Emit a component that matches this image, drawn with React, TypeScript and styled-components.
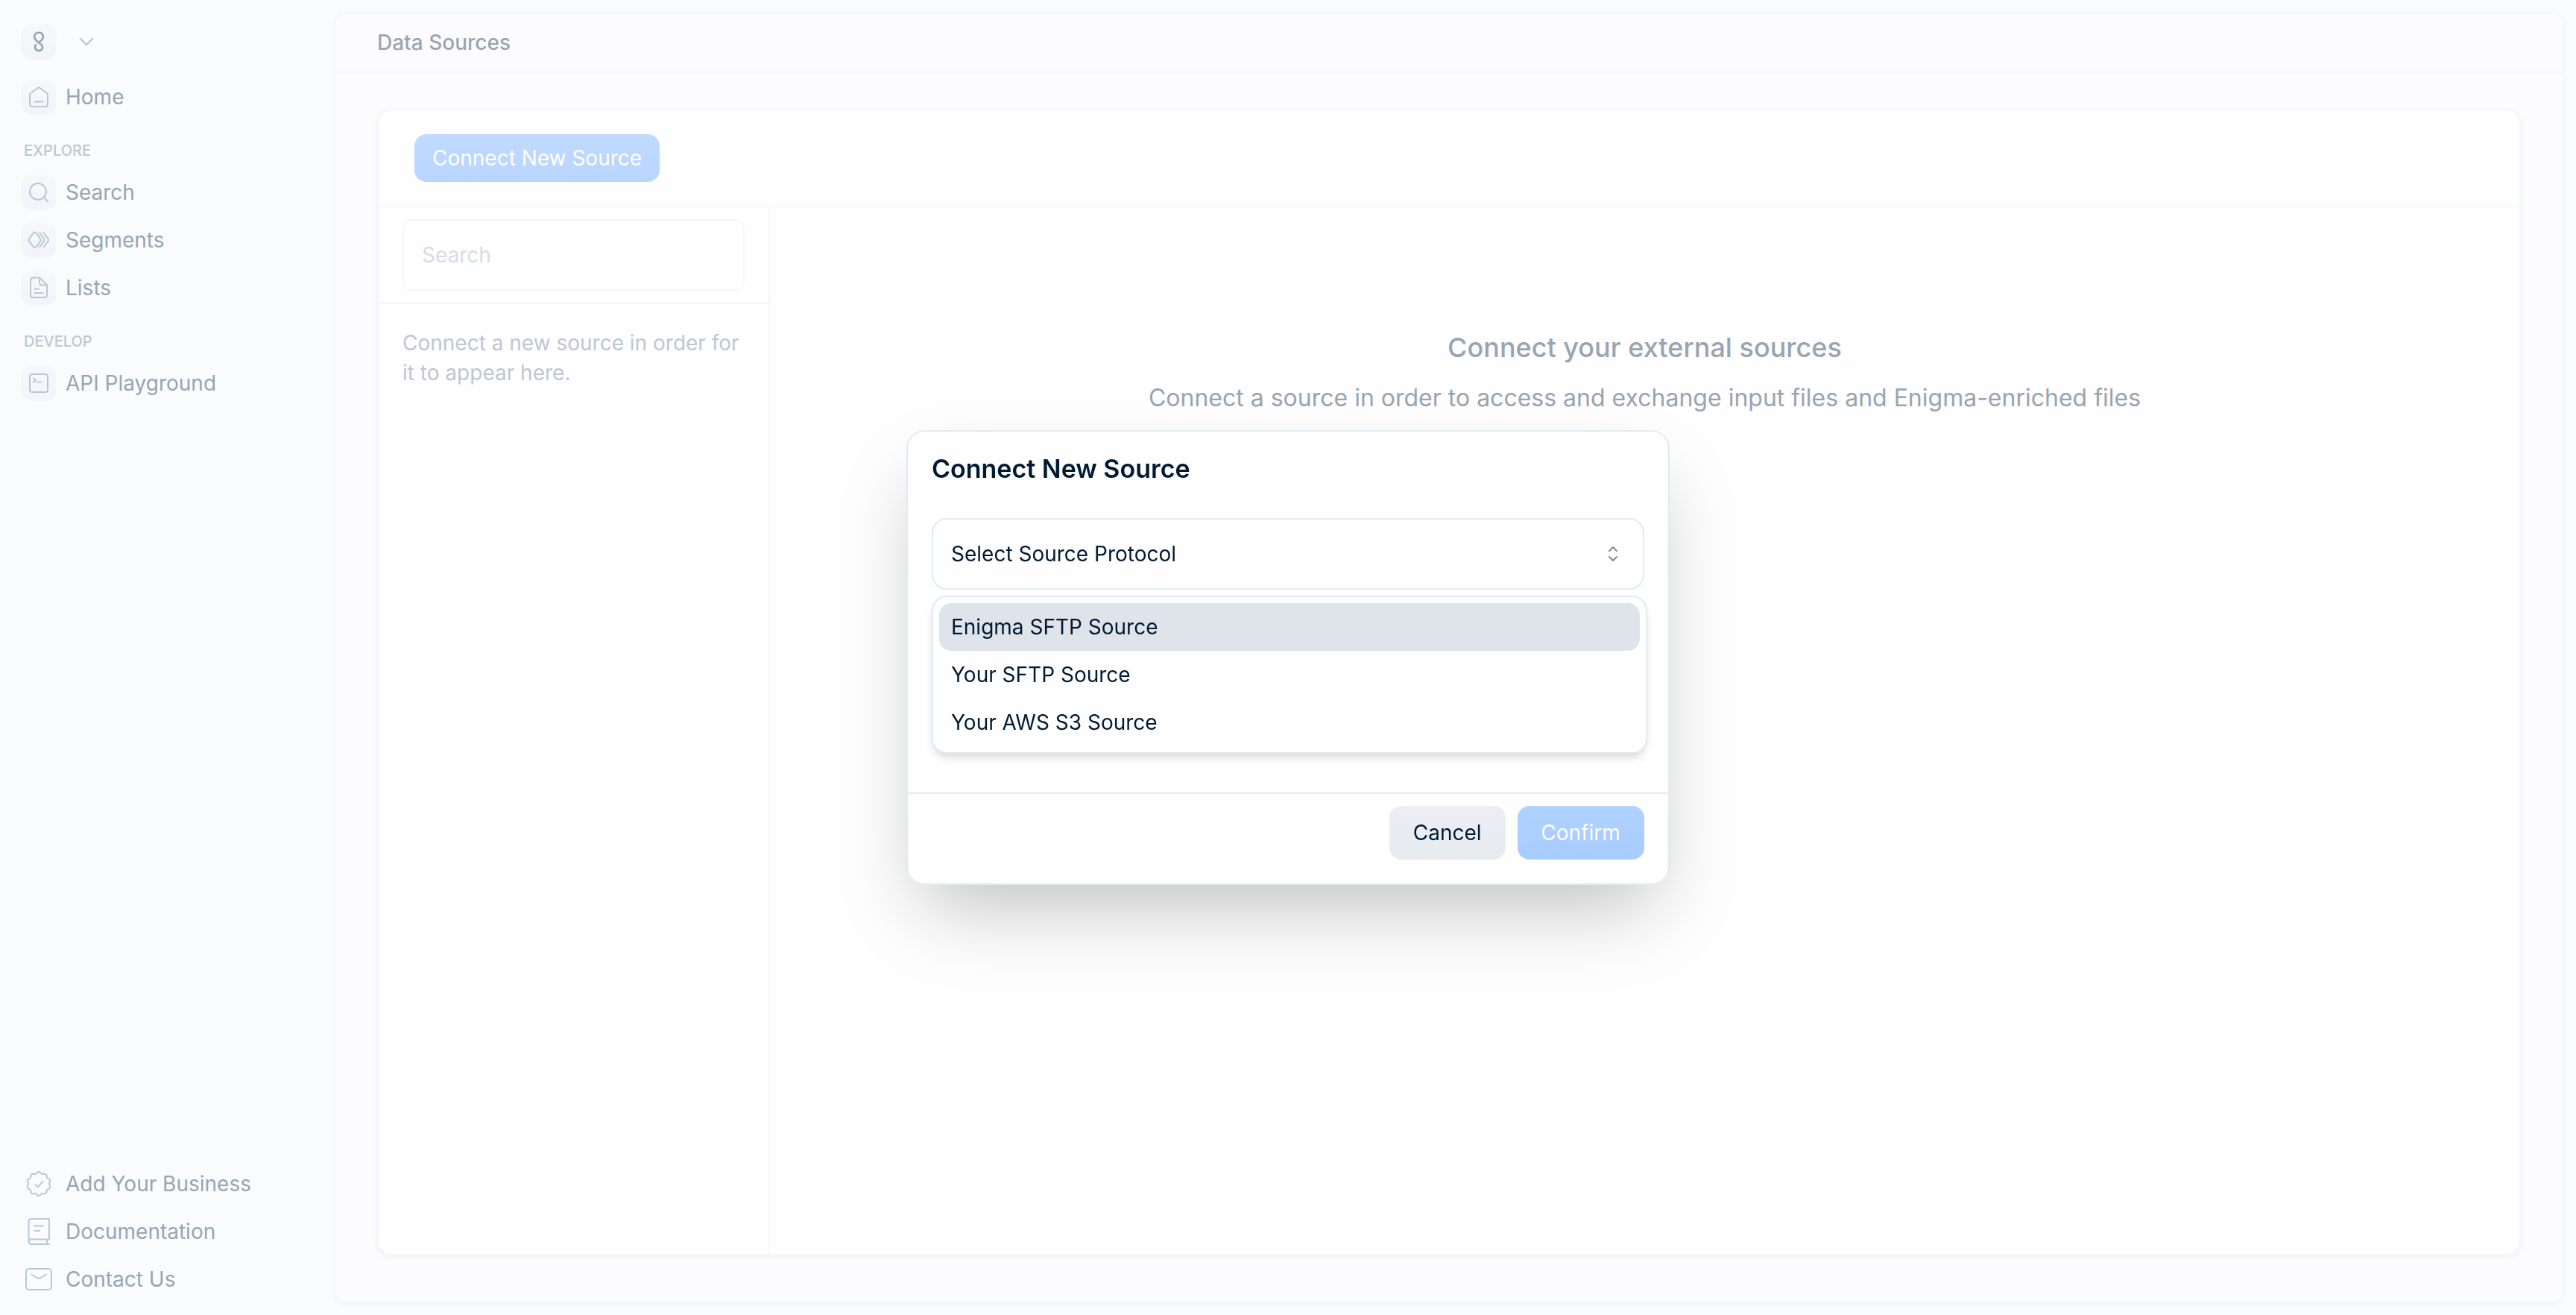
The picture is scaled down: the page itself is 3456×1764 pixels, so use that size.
import React, { useState } from 'react';
import styled, { createGlobalStyle, css } from 'styled-components';

const GlobalStyle = createGlobalStyle`
  *, *::before, *::after { box-sizing: border-box; }
  body {
    margin: 0;
    background: #fafbfd;
    font-family: Inter, "Liberation Sans", sans-serif;
    font-size: 28px;
    line-height: 40px;
    color: #98a5b1;
    -webkit-font-smoothing: antialiased;
  }
  h1, h2, h3, p, ul { margin: 0; padding: 0; }
  ul { list-style: none; }
  button, input, select { font: inherit; color: inherit; }
`;

const Shell = styled.div`
  display: flex;
  min-height: 100vh;
  padding: 16px 16px 16px 0;
`;

const Sidebar = styled.aside`
  display: flex;
  flex-direction: column;
  flex: none;
  width: 448px;
  padding: 0 28px;
`;

const AccountButton = styled.button`
  display: flex;
  align-items: center;
  gap: 28px;
  height: 80px;
  margin-bottom: 2px;
  padding: 0;
  border: 0;
  background: none;
`;

const IconTile = styled.span<{ $plain?: boolean }>`
  display: grid;
  place-items: center;
  flex: none;
  width: 48px;
  height: 48px;
  border-radius: 16px;
  color: #bec6d2;
  ${(p) =>
    !p.$plain &&
    css`
      background: linear-gradient(#f7f8fa, #f3f4f8);
    `}
`;

const NavLink = styled.a`
  display: flex;
  align-items: center;
  gap: 12px;
  height: 64px;
  color: inherit;
  text-decoration: none;
`;

const NavLabel = styled.h3`
  padding: 28px 4px 12px;
  font-size: 20px;
  font-weight: 500;
  line-height: 24px;
  color: #bec6d2;
`;

const NavFooter = styled.div`
  margin-top: auto;
`;

const Glyph = styled.svg`
  display: block;
  fill: none;
  stroke: currentColor;
  stroke-width: 2;
  stroke-linecap: round;
  stroke-linejoin: round;
`;

const LogoGlyph = styled(Glyph)`
  color: #98a5b1;
  stroke-width: 2.6;
`;

const ChevronGlyph = styled(Glyph)`
  color: #bec6d2;
  stroke-width: 2.4;
`;

const Panel = styled.main`
  display: flex;
  flex: 1;
  flex-direction: column;
  min-width: 0;
  border: 2px solid #f3f6fb;
  border-radius: 16px;
  background: #fcfcfe;
  box-shadow: 0 2px 6px rgba(0, 20, 50, 0.03);
`;

const PanelHeader = styled.header`
  display: flex;
  align-items: center;
  height: 80px;
  padding: 0 56px;
  border-bottom: 2px solid #f3f6fb;
`;

const PageTitle = styled.h1`
  font-size: 28px;
  font-weight: 500;
  line-height: 40px;
`;

const PanelBody = styled.div`
  display: flex;
  flex: 1;
  padding: 48px 56px 62px;
`;

const Card = styled.section`
  display: flex;
  flex: 1;
  flex-direction: column;
  min-width: 0;
  border: 2px solid #f3f6fb;
  border-radius: 20px;
  background: #fefeff;
  box-shadow: 0 2px 8px rgba(0, 20, 50, 0.05);
`;

const Toolbar = styled.div`
  padding: 32px 48px;
  border-bottom: 2px solid #f3f6fb;
`;

const Button = styled.button<{ $tone: 'soft' | 'primary' | 'muted' }>`
  display: block;
  height: ${(p) => (p.$tone === 'soft' ? 64 : 72)}px;
  padding: 0 ${(p) => (p.$tone === 'soft' ? 24 : 32)}px;
  border: 0;
  border-radius: 16px;
  color: ${(p) => (p.$tone === 'muted' ? '#001a33' : '#ffffff')};
  background: ${(p) =>
    ({
      soft: 'linear-gradient(#c0daff, #b9d5ff)',
      primary: 'linear-gradient(#b0d2ff, #a8cbff)',
      muted: 'linear-gradient(#eceef3, #e7eaef)',
    })[p.$tone]};
`;

const Columns = styled.div`
  display: flex;
  flex: 1;
`;

const SourceList = styled.div`
  flex: none;
  width: 525px;
  border-right: 2px solid #f3f6fb;
`;

const SearchRow = styled.div`
  padding: 16px 32px;
  border-bottom: 2px solid #f3f6fb;
`;

const SearchInput = styled.input`
  display: block;
  width: 100%;
  height: 96px;
  padding: 0 24px;
  border: 2px solid #f5f6fa;
  border-radius: 12px;
  background: transparent;
  outline: none;
  &::placeholder { color: #d5dde5; opacity: 1; }
`;

const EmptyNote = styled.p`
  padding: 32px;
  color: #bec6d2;
`;

const Detail = styled.div`
  flex: 1;
  padding: 160px 32px 0;
  text-align: center;
`;

const DetailTitle = styled.h2`
  font-size: 36px;
  font-weight: 500;
  line-height: 56px;
`;

const DetailText = styled.p`
  margin-top: 16px;
  font-size: 32px;
  line-height: 48px;
`;

const Backdrop = styled.div`
  position: fixed;
  inset: 0;
  display: grid;
  place-items: center;
`;

const Dialog = styled.div`
  width: 1024px;
  max-width: 100%;
  border: 2px solid #e3eaf2;
  border-radius: 24px;
  background: #fefeff;
  box-shadow: 0 50px 100px -24px rgba(0, 0, 0, 0.25);
  color: #001a33;
`;

const DialogTitle = styled.h2`
  padding: 28px 32px 44px;
  font-size: 34px;
  font-weight: 600;
  line-height: 44px;
`;

const DialogBody = styled.div`
  padding: 0 32px 272px;
`;

const DialogFooter = styled.div`
  display: flex;
  justify-content: flex-end;
  gap: 16px;
  padding: 16px 32px 32px;
  border-top: 2px solid #e3eaf2;
`;

const Picker = styled.div`
  position: relative;
`;

const PickerSelect = styled.select`
  display: block;
  width: 100%;
  height: 96px;
  padding: 0 24px;
  border: 2px solid #e3eaf2;
  border-radius: 20px;
  background: transparent;
  appearance: none;
  outline: none;
`;

const PickerArrows = styled(Glyph)`
  position: absolute;
  top: 36px;
  right: 30px;
  color: #7c8c9c;
  pointer-events: none;
`;

const OptionList = styled.ul`
  position: absolute;
  top: calc(100% + 8px);
  left: 0;
  width: calc(100% + 4px);
  padding: 8px;
  border: 2px solid #e3eaf2;
  border-radius: 20px;
  background: #fefeff;
  box-shadow: 0 8px 12px -2px rgba(0, 0, 0, 0.1), 0 4px 8px -4px rgba(0, 0, 0, 0.1);
`;

const Option = styled.li<{ $active: boolean }>`
  display: flex;
  align-items: center;
  height: 64px;
  padding: 0 16px;
  border-radius: 16px;
  cursor: pointer;
  background: ${(p) => (p.$active ? '#dfe3ea' : 'transparent')};
`;

const HomeIcon = () => (
  <Glyph width="28" height="28" viewBox="0 0 28 28">
    <path d="M14 1 2.6 9.2Q2 9.8 2 10.8V23.5Q2 27 5.5 27H22.5Q26 27 26 23.5V10.8Q26 9.8 25.4 9.2ZM8.5 20.5H19.5" />
  </Glyph>
);

const SearchIcon = () => (
  <Glyph width="28" height="28" viewBox="0 0 28 28">
    <circle cx="13" cy="13" r="11" />
    <path d="M21 21 26 26" />
  </Glyph>
);

const SegmentsIcon = () => (
  <Glyph width="32" height="28" viewBox="0 0 32 28">
    <path d="M8.8 4.6 2.9 12.6Q2.1 14 2.9 15.4L8.8 22.8Q10.9 24.6 13 22.8L18.3 15.4Q19.1 14 18.3 12.6L13 4.6Q10.9 2.6 8.8 4.6Z" />
    <path d="M17 4 22.8 12Q24.2 14 22.8 16L17 23.5" />
    <path d="M22.5 4 28.4 12Q29.8 14 28.4 16L22.5 23.5" />
  </Glyph>
);

const ListsIcon = () => (
  <Glyph width="28" height="30" viewBox="0 0 28 30">
    <path d="M15 1.5H6.5Q3 1.5 3 5V24.5Q3 28 6.5 28H21.5Q25 28 25 24.5V11.5ZM15 1.5V8Q15 11.5 18.5 11.5H25M8.5 16.5H14M8.5 22H19.5" />
  </Glyph>
);

const PlaygroundIcon = () => (
  <Glyph width="28" height="28" viewBox="0 0 28 28">
    <rect x="2" y="2" width="24" height="24" rx="3" />
    <path d="M7 7.5 10 10.2 7 13M12.5 12.8H17" />
  </Glyph>
);

const badgePath = (() => {
  const points: string[] = [];
  for (let i = 0; i < 120; i += 1) {
    const angle = (i / 120) * Math.PI * 2;
    const wave = Math.cos(angle * 10);
    const radius = 14.9 + 1.1 * Math.sign(wave) * Math.pow(Math.abs(wave), 0.8);
    const x = 18 + radius * Math.sin(angle);
    const y = 18 - radius * Math.cos(angle);
    points.push(`${x.toFixed(2)} ${y.toFixed(2)}`);
  }
  return `M${points.join('L')}Z`;
})();

const BadgeIcon = () => (
  <Glyph width="36" height="36" viewBox="0 0 36 36">
    <path d={badgePath} />
    <path d="M13.5 19 16.8 22.2 23.5 15" />
  </Glyph>
);

const BookIcon = () => (
  <Glyph width="36" height="38" viewBox="0 0 36 38">
    <path d="M32 29.5V2H8.5Q4.5 2 4.5 6V32.5M32 29.5H8Q4.5 29.5 4.5 32.5T8 36H32M30 29.5Q28 33 30 36M12 11.5H24M12 18H19" />
  </Glyph>
);

const MailIcon = () => (
  <Glyph width="36" height="32" viewBox="0 0 36 32">
    <rect x="1" y="2" width="34" height="28" rx="4" />
    <path d="M8 9.5 16 14.4Q18 15.5 20 14.4L28 9.5" />
  </Glyph>
);

const LogoIcon = () => (
  <LogoGlyph width="20" height="28" viewBox="0 0 20 28">
    <path d="M6 18C3.6 22.5 6 26 10 26S16.400 22.500 14.300 18.800C12.800 16.400 9 15 6.300 11.800C2 6.800 4.500 1.800 10 1.800S18 6.800 13.700 11.800C12.500 13.300 11.300 14.300 10 15.300" />
  </LogoGlyph>
);

const protocols = ['Enigma SFTP Source', 'Your SFTP Source', 'Your AWS S3 Source'];

const explore = [
  { label: 'Search', Icon: SearchIcon },
  { label: 'Segments', Icon: SegmentsIcon },
  { label: 'Lists', Icon: ListsIcon },
];

const help = [
  { label: 'Add Your Business', Icon: BadgeIcon },
  { label: 'Documentation', Icon: BookIcon },
  { label: 'Contact Us', Icon: MailIcon },
];

function NavItem({ label, Icon, plain }: { label: string; Icon: React.FC; plain?: boolean }) {
  return (
    <NavLink href="#">
      <IconTile $plain={plain}>
        <Icon />
      </IconTile>
      {label}
    </NavLink>
  );
}

function ProtocolPicker() {
  const [open, setOpen] = useState(true);
  const [active, setActive] = useState(0);
  const [value, setValue] = useState('');
  return (
    <Picker>
      <PickerSelect
        aria-label="Source protocol"
        value={value}
        onChange={(e) => setValue(e.target.value)}
        onMouseDown={(e) => {
          e.preventDefault();
          setOpen(!open);
        }}
      >
        <option value="">Select Source Protocol</option>
        {protocols.map((name) => (
          <option key={name}>{name}</option>
        ))}
      </PickerSelect>
      <PickerArrows width="24" height="24" viewBox="0 0 24 24">
        <path d="M7 8 12 3 17 8M7 16 12 21 17 16" />
      </PickerArrows>
      {open && (
        <OptionList role="listbox" aria-label="Source protocol">
          {protocols.map((name, i) => (
            <Option
              key={name}
              role="option"
              aria-selected={name === value}
              $active={i === active}
              onMouseEnter={() => setActive(i)}
              onClick={() => {
                setValue(name);
                setOpen(false);
              }}
            >
              {name}
            </Option>
          ))}
        </OptionList>
      )}
    </Picker>
  );
}

export default function App() {
  return (
    <>
      <GlobalStyle />
      <Shell>
        <Sidebar>
          <AccountButton type="button" aria-label="Account">
            <IconTile>
              <LogoIcon />
            </IconTile>
            <ChevronGlyph width="24" height="24" viewBox="0 0 24 24">
              <path d="M4 8 12 16 20 8" />
            </ChevronGlyph>
          </AccountButton>
          <nav>
            <NavItem label="Home" Icon={HomeIcon} />
            <NavLabel>EXPLORE</NavLabel>
            {explore.map((item) => (
              <NavItem key={item.label} {...item} />
            ))}
            <NavLabel>DEVELOP</NavLabel>
            <NavItem label="API Playground" Icon={PlaygroundIcon} />
          </nav>
          <NavFooter>
            {help.map((item) => (
              <NavItem key={item.label} {...item} plain />
            ))}
          </NavFooter>
        </Sidebar>
        <Panel>
          <PanelHeader>
            <PageTitle>Data Sources</PageTitle>
          </PanelHeader>
          <PanelBody>
            <Card>
              <Toolbar>
                <Button type="button" $tone="soft">
                  Connect New Source
                </Button>
              </Toolbar>
              <Columns>
                <SourceList>
                  <SearchRow>
                    <SearchInput type="text" placeholder="Search" aria-label="Search sources" />
                  </SearchRow>
                  <EmptyNote>Connect a new source in order for it to appear here.</EmptyNote>
                </SourceList>
                <Detail>
                  <DetailTitle>Connect your external sources</DetailTitle>
                  <DetailText>
                    Connect a source in order to access and exchange input files and Enigma-enriched files
                  </DetailText>
                </Detail>
              </Columns>
            </Card>
          </PanelBody>
        </Panel>
      </Shell>
      <Backdrop>
        <Dialog role="dialog" aria-modal="true" aria-labelledby="dialog-title">
          <DialogTitle id="dialog-title">Connect New Source</DialogTitle>
          <DialogBody>
            <ProtocolPicker />
          </DialogBody>
          <DialogFooter>
            <Button type="button" $tone="muted">
              Cancel
            </Button>
            <Button type="button" $tone="primary">
              Confirm
            </Button>
          </DialogFooter>
        </Dialog>
      </Backdrop>
    </>
  );
}
